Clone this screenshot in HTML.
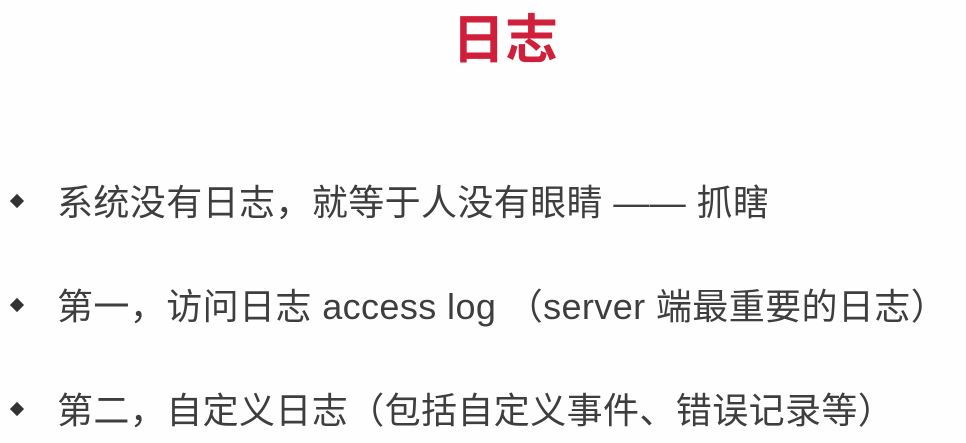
<!DOCTYPE html>
<html><head><meta charset="utf-8"><style>
html,body{margin:0;padding:0;background:#fefefe;width:966px;height:443px;overflow:hidden;position:relative}
.t{position:absolute;left:452px;top:-2px;font:bold 53px "Liberation Sans","Noto Sans CJK SC",sans-serif;color:#cf1f3b;white-space:nowrap}
.l{position:absolute;left:57px;font:36px "Liberation Sans","Noto Sans CJK SC",sans-serif;color:#3e3e3e;white-space:nowrap;line-height:40px;letter-spacing:0.4px}
.b{position:absolute;left:12px;width:10px;height:10px;background:#333;transform:rotate(45deg)}
</style></head><body>
<div class="t">日志</div>
<div class="b" style="top:196px"></div>
<div class="l" style="top:183px">系统没有日志，就等于人没有眼睛 —— 抓瞎</div>
<div class="b" style="top:300px"></div>
<div class="l" style="top:287px">第一，访问日志 access log （server 端最重要的日志）</div>
<div class="b" style="top:404px"></div>
<div class="l" style="top:391px">第二，自定义日志（包括自定义事件、错误记录等）</div>
</body></html>
